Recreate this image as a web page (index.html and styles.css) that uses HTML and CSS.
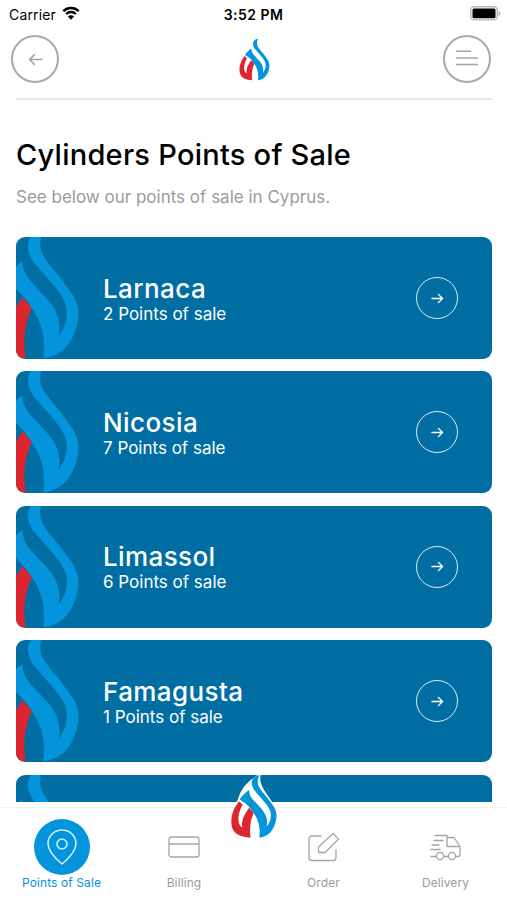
FILE: index.html
```html
<!DOCTYPE html>
<html lang="en">
<head>
    <meta charset="UTF-8">
    <meta name="viewport" content="width=device-width, initial-scale=1.0">
    <title>Cylinders Points of Sale</title>
    <link rel="stylesheet" href="styles.css">
</head>
<body>

<!-- Shared symbols -->
<svg class="sprite" width="0" height="0">
    <symbol id="flame" viewBox="-48 -4 291 397">
        <g class="flame-outline">
            <path d="M131 4C60 45 20 90 4 158C-30 205-52 270-36 325C-22 367 20 382 75 385C70 330 78 280 97 240C130 285 135 320 130 385C190 385 235 335 235 250C225 160 110 90 131 4Z"/>
        </g>
        <use href="#flame-parts"/>
    </symbol>
    <g id="flame-parts">
        <path class="flame-blue" d="M131 4C88 10 80 36 85 62C90 82 98 94 105 102L140 142C162 167 181 188 190 207C208 240 203 282 175 318C184 280 172 244 150 217C135 198 121 185 105 167C84 146 70 130 67 94C48 108 26 126 10 150C20 160 34 168 48 177C66 194 80 211 95 234C122 272 138 316 130 385C150 383 166 377 180 367C206 352 235 305 235 250C235 230 229 212 220 197L180 142C164 122 150 108 140 92C118 66 114 34 131 4Z"/>
        <path class="flame-red" d="M6 162C-28 205-52 265-36 325C-22 367 20 382 77 385C68 330 74 285 95 234L68 202C44 234 17 278 26 322C-12 300 0 232 28 182Z"/>
    </g>
    <symbol id="arrow" viewBox="0 0 14 12">
        <path d="M1 6H12.5M8 1.5L12.5 6L8 10.5"/>
    </symbol>
</svg>

<div class="status-bar">
    <div class="carrier">
        <span>Carrier</span>
        <svg class="wifi" viewBox="0 0 18 14">
            <path d="M1.3 5.2A11 11 0 0 1 16.7 5.2M4.1 8A7 7 0 0 1 13.9 8"/>
            <path class="dot" d="M9 13.7L5.9 10.5A4.4 4.4 0 0 1 12.1 10.5Z"/>
        </svg>
    </div>
    <span class="time">3:52 PM</span>
    <svg class="battery" viewBox="0 0 31 15">
        <rect class="shell" x=".7" y=".7" width="26.6" height="13.2" rx="3.5"/>
        <rect x="2.5" y="2.4" width="23" height="9.8" rx="1.5"/>
        <path class="cap" d="M28.6 5V10Q30.6 9 30.6 7.5T28.6 5Z"/>
    </svg>
</div>

<header class="top-bar">
    <button class="round-button back"><svg><use href="#arrow"/></svg></button>
    <svg class="logo"><use href="#flame"/></svg>
    <button class="round-button menu">
        <svg viewBox="0 0 22 16"><path d="M0 1.3H15M0 8H22M0 14.6H22"/></svg>
    </button>
</header>

<main class="content">
    <h1>Cylinders Points of Sale</h1>
    <p class="intro">See below our points of sale in Cyprus.</p>

    <div class="card-list">
        <a class="card">
            <svg class="card-flame" viewBox="48 21 195 366"><use href="#flame-parts"/></svg>
            <div class="card-text"><h2>Larnaca</h2><p>2 Points of sale</p></div>
            <span class="go"><svg><use href="#arrow"/></svg></span>
        </a>
        <a class="card">
            <svg class="card-flame" viewBox="48 21 195 366"><use href="#flame-parts"/></svg>
            <div class="card-text"><h2>Nicosia</h2><p>7 Points of sale</p></div>
            <span class="go"><svg><use href="#arrow"/></svg></span>
        </a>
        <a class="card">
            <svg class="card-flame" viewBox="48 21 195 366"><use href="#flame-parts"/></svg>
            <div class="card-text"><h2>Limassol</h2><p>6 Points of sale</p></div>
            <span class="go"><svg><use href="#arrow"/></svg></span>
        </a>
        <a class="card">
            <svg class="card-flame" viewBox="48 21 195 366"><use href="#flame-parts"/></svg>
            <div class="card-text"><h2>Famagusta</h2><p>1 Points of sale</p></div>
            <span class="go"><svg><use href="#arrow"/></svg></span>
        </a>
        <a class="card">
            <svg class="card-flame" viewBox="48 21 195 366"><use href="#flame-parts"/></svg>
        </a>
    </div>
</main>

<nav class="tab-bar">
    <a class="tab active">
        <span class="tab-icon">
            <svg width="32" height="38" viewBox="0 0 32 38">
                <path d="M16 36C10 31 2 23 2 15.5A14 13.5 0 0 1 30 15.5C30 23 22 31 16 36Z"/>
                <circle cx="16" cy="16" r="5"/>
            </svg>
        </span>
        <span>Points of Sale</span>
    </a>
    <a class="tab">
        <span class="tab-icon">
            <svg width="32" height="22" viewBox="0 0 32 22">
                <rect x="1" y="1" width="30" height="20" rx="2.5"/>
                <path d="M1 8H31"/>
            </svg>
        </span>
        <span>Billing</span>
    </a>
    <a class="tab">
        <span class="tab-icon">
            <svg width="32" height="30" viewBox="0 0 32 30">
                <path d="M13 4H4Q1 4 1 7V25.500Q1 28.500 4 28.500H25Q28 28.500 28 25.500V18"/>
                <path d="M25 1.500L30.500 7L17 20.500H10.500V15Z"/>
            </svg>
        </span>
        <span>Order</span>
    </a>
    <a class="tab">
        <span class="tab-icon">
            <svg width="32" height="27" viewBox="0 0 32 27">
                <path d="M5 1.500H17V12.500M17 3.500H24L30 12.500V20Q30 22.500 28 22.500H26M17 12.500H30M6 22.500H1M18 22.500H14"/>
                <path d="M4 6.500H13M2 11H9M1 15.500H10"/>
                <circle cx="10" cy="22" r="3.600"/>
                <circle cx="22" cy="22" r="3.600"/>
            </svg>
        </span>
        <span>Delivery</span>
    </a>
    <svg class="tab-flame"><use href="#flame"/></svg>
</nav>

</body>
</html>
```
FILE: styles.css
```css
:root {
    --blue: #0394dc;
    --card-blue: #006ea3;
    --red: #dc252e;
    --grey: #9b9b9b;
    --font-sans: Inter, "Liberation Sans", sans-serif;
}

* { margin: 0; padding: 0; box-sizing: border-box; }

body {
    display: flex;
    flex-direction: column;
    height: 100vh;
    overflow: hidden;
    background: #fff;
    color: #000;
    font-family: var(--font-sans);
}

svg { display: block; fill: none; stroke-linecap: round; stroke-linejoin: round; }

.sprite { position: absolute; }
.flame-blue { fill: var(--blue); }
.flame-red { fill: var(--red); }
.flame-outline { fill: #fff; stroke: #fff; stroke-width: 14; }

/* --- Status bar --- */
.status-bar {
    display: grid;
    grid-template-columns: 1fr auto 1fr;
    align-items: center;
    height: 28px;
    padding: 0 6px 0 9px;
    font-size: 14px;
}
.carrier { display: flex; align-items: center; gap: 6px; letter-spacing: .15px; }
.wifi { width: 18px; height: 14px; margin-top: -2px; stroke: #000; stroke-width: 2.4; stroke-linecap: butt; }
.wifi .dot { fill: #000; stroke: none; }
.time { margin-left: -3px; font-weight: 600; letter-spacing: .45px; }
.battery { width: 31px; height: 15px; margin-top: -2px; justify-self: end; fill: #000; }
.battery .shell { fill: #fff; stroke: #b5b5b5; stroke-width: 1.4; }
.battery .cap { fill: #b5b5b5; }

/* --- Top bar --- */
.top-bar {
    display: flex;
    justify-content: space-between;
    height: 72px;
    margin: 0 15px 0 16px;
    border-bottom: 2px solid #e4e4e4;
}
.round-button {
    display: flex;
    align-items: center;
    justify-content: center;
    width: 48px;
    height: 48px;
    margin-top: 7px;
    border: 2px solid #a9a9a9;
    border-radius: 50%;
    background: none;
    color: #a5a5a5;
}
.round-button svg { stroke: currentColor; stroke-width: 1.5; }
.back { margin-left: -5px; }
.back svg { width: 15px; height: 13px; transform: scaleX(-1); }
.menu { margin-right: 1px; }
.menu svg { width: 22px; height: 16px; margin-top: -3px; stroke-width: 1.5; stroke-linecap: butt; }
.logo { width: 33px; height: 43px; margin: 10px 0 0 6px; }

/* --- Content --- */
.content {
    flex: 1;
    min-height: 0;
    padding: 36px 15px 0 16px;
    overflow: hidden;
}
h1 {
    font-size: 29px;
    font-weight: 450;
    line-height: 38px;
    letter-spacing: .25px;
    white-space: nowrap;
}
.intro {
    margin-top: 11px;
    color: var(--grey);
    font-size: 17px;
    line-height: 24px;
}
.card-list {
    display: flex;
    flex-direction: column;
    gap: 12.4px;
    margin-top: 28px;
}
.card {
    display: flex;
    flex: none;
    align-items: center;
    height: 122px;
    padding-right: 34px;
    border-radius: 9px;
    overflow: hidden;
    background: var(--card-blue);
    color: #fff;
}
.card-flame { width: 65px; height: 122px; margin-right: 22px; }
.card-text { flex: 1; padding-top: 2px; }
.card h2 { font-size: 26px; font-weight: 500; line-height: 30px; letter-spacing: .4px; }
.card p { font-size: 17px; line-height: 21px; }
.go {
    display: flex;
    align-items: center;
    justify-content: center;
    width: 42px;
    height: 42px;
    border: 1.6px solid #d4edf9;
    border-radius: 50%;
}
.go svg { width: 13px; height: 11px; stroke: #fff; stroke-width: 1.5; }

/* --- Tab bar --- */
.tab-bar {
    position: relative;
    display: grid;
    grid-template-columns: 123px 122px 157px 87px;
    height: 98px;
    padding-top: 17px;
    background: linear-gradient(#fff 5px, #f4f2f4 5px, #f4f2f4 6px, #fff 6px);
    color: var(--grey);
    font-size: 12px;
    line-height: 16px;
}
.tab { display: flex; flex-direction: column; align-items: center; letter-spacing: .1px; }
.tab-icon {
    display: flex;
    align-items: center;
    justify-content: center;
    width: 56px;
    height: 56px;
}
.tab-icon svg { stroke: #a5a5a5; stroke-width: 1.3; }
.active { color: var(--blue); }
.active .tab-icon { border-radius: 50%; background: var(--blue); }
.active .tab-icon svg { stroke: #d4edf9; stroke-width: 1.6; }
.tab-flame {
    position: absolute;
    top: -28px;
    left: 230px;
    width: 48px;
    height: 65px;
}
```
